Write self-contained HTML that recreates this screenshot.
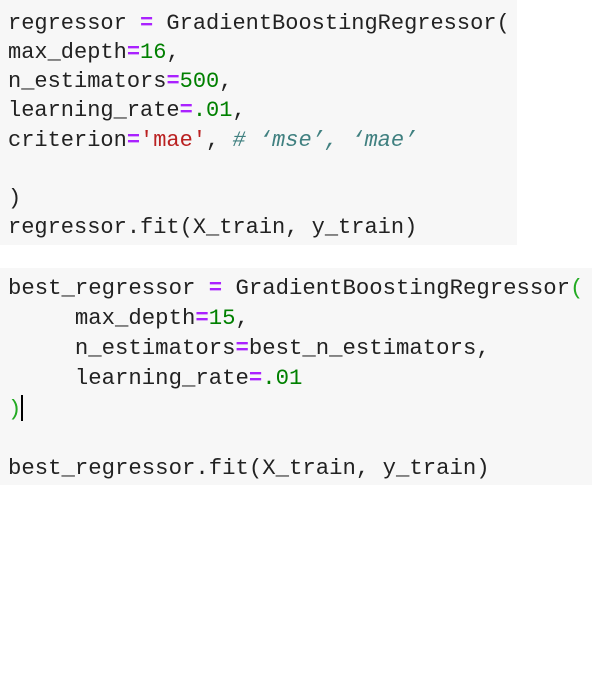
<!DOCTYPE html>
<html><head><meta charset="utf-8"><style>
html,body{margin:0;padding:0;background:#fff;width:605px;height:685px;overflow:hidden}
.b{position:absolute;left:0;background:#f7f7f7;font-family:"Liberation Mono",monospace;color:#222;white-space:pre}
.b div{position:absolute;left:8px}
#b1{top:0;width:517px;height:245px;font-size:22px}
#b2{top:268px;width:592px;height:217px;font-size:22.3px}
.o{color:#aa22ff;font-weight:bold}
.n{color:#008000}
.s{color:#ba2121}
.c{color:#408080;font-style:italic}
.g{color:#22aa22}
</style></head><body>
<div class="b" id="b1">
<div style="top:11px">regressor <span class="o">=</span> GradientBoostingRegressor(</div>
<div style="top:40px">max_depth<span class="o">=</span><span class="n">16</span>,</div>
<div style="top:69px">n_estimators<span class="o">=</span><span class="n">500</span>,</div>
<div style="top:98px">learning_rate<span class="o">=</span><span class="n">.01</span>,</div>
<div style="top:128px">criterion<span class="o">=</span><span class="s">'mae'</span>, <span class="c"># ‘mse’, ‘mae’</span></div>
<div style="top:186px">)</div>
<div style="top:215px">regressor.fit(X_train, y_train)</div>
</div>
<div class="b" id="b2">
<div style="top:7px">best_regressor <span class="o">=</span> GradientBoostingRegressor<span class="g">(</span></div>
<div style="top:37px">     max_depth<span class="o">=</span><span class="n">15</span>,</div>
<div style="top:67px">     n_estimators<span class="o">=</span>best_n_estimators,</div>
<div style="top:97px">     learning_rate<span class="o">=</span><span class="n">.01</span></div>
<div style="top:127px"><span class="g">)</span><span style="display:inline-block;width:2px;height:26px;background:#000;vertical-align:-6px"></span></div>
<div style="top:187px">best_regressor.fit(X_train, y_train)</div>
</div>
</body></html>
